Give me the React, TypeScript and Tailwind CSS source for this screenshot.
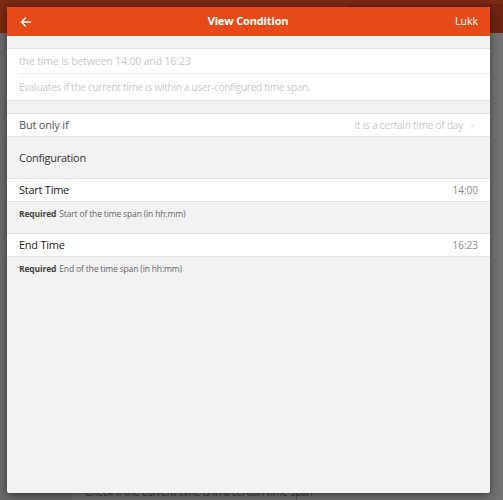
import { ChevronRight } from "lucide-react";

const font = { fontFamily: '"Open Sans", "Noto Sans", sans-serif' };

function Backdrop() {
  // dimmed app behind the dialog
  return (
    <div className="flex h-[500px] w-[503px] flex-col bg-[#6d6d6d]">
      <div className="flex h-[33px] bg-[#7a2912]">
        <div className="flex-1" />
        <div className="mt-[4px] h-[29px] w-[155px] bg-[#6e2410]" />
      </div>
      <div className="flex flex-1">
        <div className="w-[72px] bg-[#6a6a6a]" />
        <div className="flex flex-1 flex-col justify-end bg-[#727272] pl-[13px]">
          <span className="text-[10px] text-[#3a3a3a]">Check if the current time is in a certain time span</span>
        </div>
      </div>
    </div>
  );
}

function Row({ label, value }: { label: string; value: string }) {
  return (
    <div className="flex h-[24px] items-center justify-between border-y border-[#e3e3e3] bg-white px-[12px]">
      <span className="text-[11px] tracking-[-0.25px] text-[#222]">{label}</span>
      <span className="text-[10px] text-[#8a8a8a]">{value}</span>
    </div>
  );
}

export default function App() {
  return (
    <div className="relative h-[500px] w-[503px] overflow-hidden" style={font}>
      <Backdrop />
      <div className="absolute left-[7px] top-[7px] flex h-[486px] w-[483px] flex-col overflow-hidden rounded-[2px] bg-[#f2f2f2] shadow-[0_2px_8px_rgba(0,0,0,0.5)]">
        <header className="flex h-[29px] items-center justify-between bg-[#e64a19] px-[12px] text-white">
          <svg width="14" height="14" viewBox="0 0 24 24" fill="none" stroke="currentColor" strokeWidth="2.4" strokeLinecap="round" strokeLinejoin="round">
            <path d="M20 12H4M11 5l-7 7 7 7" />
          </svg>
          <span className="ml-[8px] text-[11px] font-bold tracking-[-0.15px]">View Condition</span>
          <span className="text-[10.5px]">Lukk</span>
        </header>

        <div className="h-[12px]" />

        <div className="flex flex-col border-y border-[#e3e3e3] bg-white pl-[12px]">
          <div className="flex h-[25px] items-center border-b border-[#ececec] pt-[2px] text-[10.5px] tracking-[-0.15px] text-[#c9c9c9]">
            the time is between 14:00 and 16:23
          </div>
          <div className="flex h-[26px] items-center pt-[1px] text-[10px] tracking-[-0.25px] text-[#c9c9c9]">
            Evaluates if the current time is within a user-configured time span.
          </div>
        </div>

        <div className="h-[12px]" />

        <div className="flex h-[24px] items-center justify-between border-y border-[#e3e3e3] bg-white pl-[12px] pr-[13px] pt-[1px]">
          <span className="text-[11px] tracking-[-0.2px] text-[#555]">But only if</span>
          <span className="flex items-center gap-[4px] text-[10px] tracking-[-0.2px] text-[#c9c9c9]">
            it is a certain time of day
            <ChevronRight size={10} strokeWidth={1.5} />
          </span>
        </div>

        <div className="flex h-[41px] items-center px-[12px] pt-[1px] text-[11px] tracking-[-0.25px] text-[#333]">Configuration</div>

        <Row label="Start Time" value="14:00" />
        <div className="flex h-[31px] items-start px-[12px] pt-[6px] text-[8.5px] tracking-[-0.15px] text-[#666]">
          <span className="mr-[3px] font-bold text-[#444]">Required</span>Start of the time span (in hh:mm)
        </div>

        <Row label="End Time" value="16:23" />
        <div className="flex h-[25px] items-start px-[12px] pt-[6px] text-[8.5px] tracking-[-0.15px] text-[#666]">
          <span className="mr-[3px] font-bold text-[#444]">Required</span>End of the time span (in hh:mm)
        </div>
      </div>
    </div>
  );
}
